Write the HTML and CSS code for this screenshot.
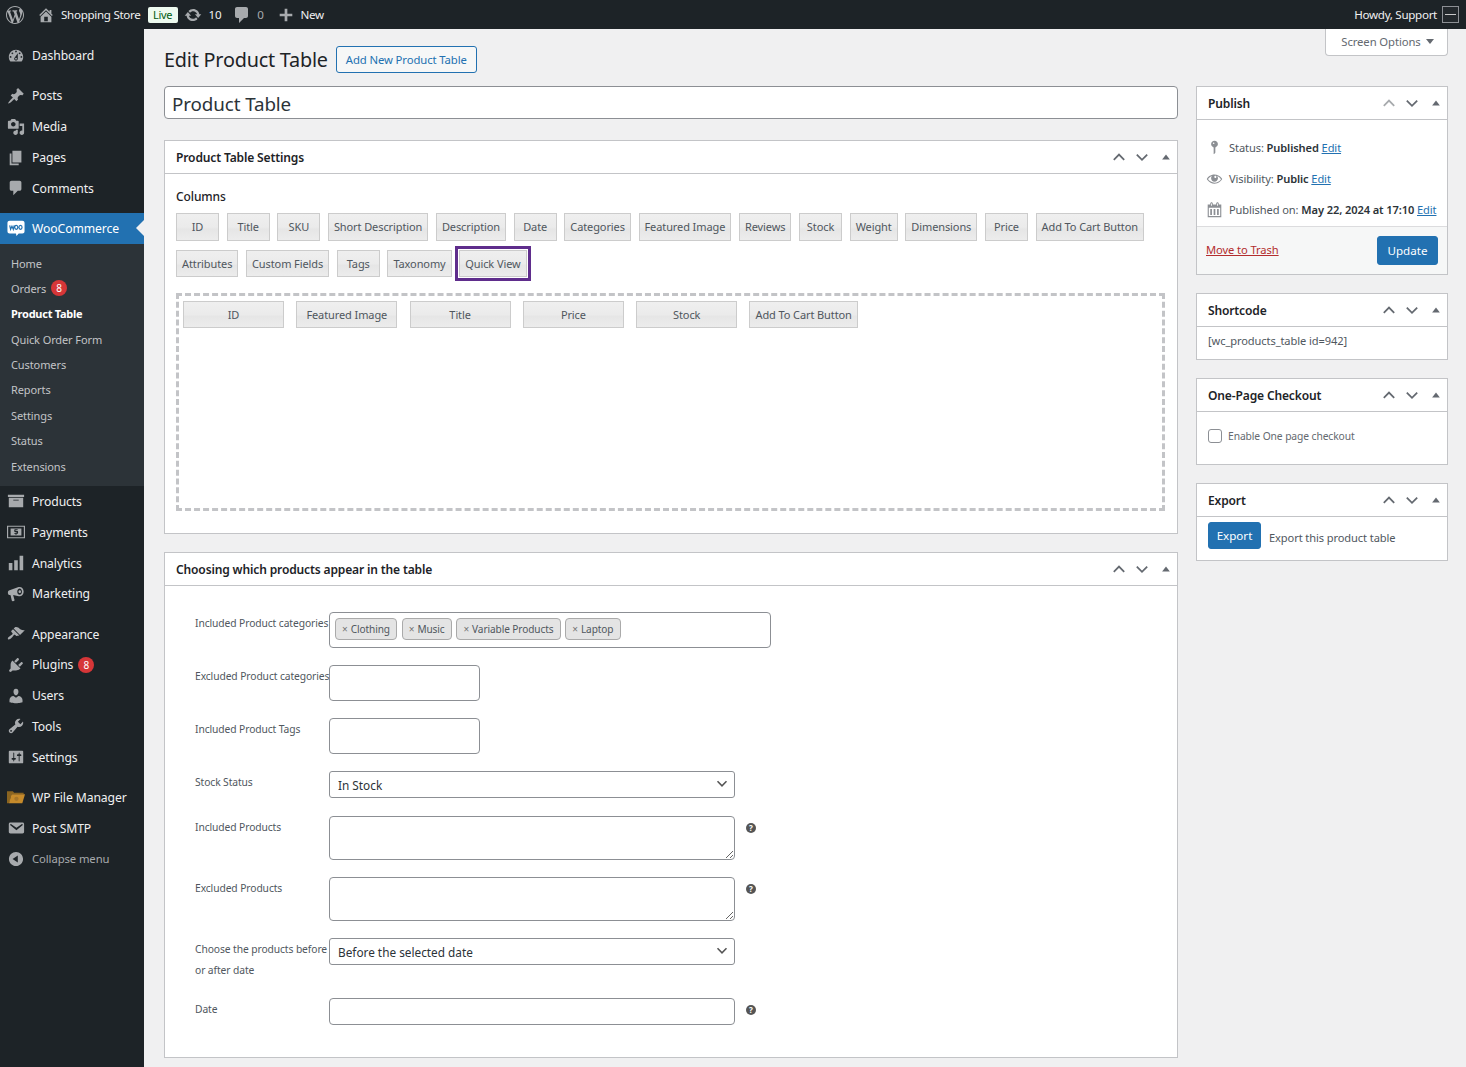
FILE: index.html
```html
<!DOCTYPE html>
<html lang="en">
<head>
<meta charset="utf-8">
<title>Edit Product Table</title>
<link rel="stylesheet" href="styles.css">
</head>
<body>
<svg class="sprite" aria-hidden="true">
<symbol id="i-wp" viewBox="0 0 20 20"><path d="M20 10c0-5.51-4.49-10-10-10C4.48 0 0 4.49 0 10c0 5.52 4.48 10 10 10 5.51 0 10-4.48 10-10zM7.78 15.37L4.37 6.22c.55-.02 1.17-.08 1.17-.08.5-.06.44-1.13-.06-1.11 0 0-1.45.11-2.37.11-.18 0-.37 0-.58-.01C4.12 2.69 6.87 1.11 10 1.11c2.33 0 4.45.87 6.05 2.34-.68-.11-1.65.39-1.65 1.58 0 .74.45 1.36.9 2.1.35.61.55 1.36.55 2.46 0 1.49-1.4 5-1.4 5l-3.03-8.37c.54-.02.82-.17.82-.17.5-.05.44-1.25-.06-1.22 0 0-1.44.12-2.38.12-.87 0-2.33-.12-2.33-.12-.5-.03-.56 1.2-.06 1.22l.92.08 1.26 3.41zM17.41 10c.24-.64.74-1.87.43-4.25.7 1.29 1.05 2.71 1.05 4.25 0 3.29-1.73 6.24-4.4 7.78.97-2.59 1.94-5.2 2.92-7.78zM6.1 18.09C3.12 16.65 1.11 13.53 1.11 10c0-1.3.23-2.48.72-3.59C3.25 10.3 4.67 14.2 6.1 18.09zm4.03-6.63l2.58 6.98c-.86.29-1.76.45-2.71.45-.79 0-1.57-.11-2.29-.33.81-2.38 1.62-4.74 2.42-7.1z"/></symbol>
<symbol id="i-home" viewBox="0 0 20 20"><path d="M16 8.5l1.53 1.53-1.06 1.06L10 4.62l-6.47 6.47-1.06-1.06L10 2.5l4 4v-2h2v4zm-6-2.46l6 5.99V18H4v-5.97zM12 17v-5H8v5h4z"/></symbol>
<symbol id="i-update" viewBox="0 0 20 20"><path d="M10.2 3.28c3.53 0 6.43 2.61 6.92 6h2.08l-3.5 4-3.5-4h2.32c-.45-1.97-2.21-3.45-4.32-3.45-1.45 0-2.73.71-3.54 1.78L4.95 5.66C6.23 4.2 8.11 3.28 10.2 3.28zm-.4 13.44c-3.52 0-6.43-2.61-6.92-6H.8l3.5-4c1.17 1.33 2.33 2.67 3.5 4H5.48c.45 1.97 2.21 3.45 4.32 3.45 1.45 0 2.73-.71 3.54-1.78l1.71 1.95c-1.28 1.46-3.15 2.38-5.25 2.38z"/></symbol>
<symbol id="i-comment" viewBox="0 0 20 20"><path d="M5 2h9c1.1 0 2 .9 2 2v7c0 1.1-.9 2-2 2h-2l-5 5v-5H5c-1.1 0-2-.9-2-2V4c0-1.1.9-2 2-2z"/></symbol>
<symbol id="i-plus" viewBox="0 0 20 20"><path d="M17 8.500v3h-5.500v5.500h-3v-5.500H3v-3h5.500V3h3v5.500z"/></symbol>
<symbol id="i-dash" viewBox="0 0 20 20"><path d="M3.76 16h12.48c1.1-1.37 1.76-3.11 1.76-5 0-4.42-3.58-8-8-8s-8 3.58-8 8c0 1.89.66 3.63 1.76 5zM10 4c.55 0 1 .45 1 1s-.45 1-1 1-1-.45-1-1 .45-1 1-1zM6 6c.55 0 1 .45 1 1s-.45 1-1 1-1-.45-1-1 .45-1 1-1zm8 0c.55 0 1 .45 1 1s-.45 1-1 1-1-.45-1-1 .45-1 1-1zm-5.370 5.550L12 7v6c0 1.100-.9 2-2 2s-2-.9-2-2c0-.57.24-1.080.63-1.450zM4 10c.55 0 1 .45 1 1s-.45 1-1 1-1-.45-1-1 .45-1 1-1zm12 0c.55 0 1 .45 1 1s-.45 1-1 1-1-.45-1-1 .45-1 1-1zm-5 3c0-.55-.45-1-1-1s-1 .45-1 1 .45 1 1 1 1-.45 1-1z" fill-rule="evenodd"/></symbol>
<symbol id="i-pin" viewBox="0 0 20 20"><path d="M10.44 3.020l1.820-1.820 6.360 6.350-1.830 1.820c-1.050-.68-2.480-.57-3.410.36l-.75.75c-.92.93-1.040 2.350-.35 3.410l-1.830 1.820-2.410-2.410-2.800 2.790c-.42.42-3.380 2.710-3.800 2.290s1.860-3.390 2.280-3.810l2.790-2.790L4.100 9.360l1.830-1.820c1.050.69 2.480.57 3.400-.36l.75-.75c.93-.92 1.050-2.350.36-3.410z"/></symbol>
<symbol id="i-media" viewBox="0 0 20 20"><path d="M13 11V4c0-.55-.45-1-1-1h-1.670L9 1H5L3.670 3H2c-.55 0-1 .45-1 1v7c0 .55.45 1 1 1h10c.55 0 1-.45 1-1zM7 4.500c1.380 0 2.500 1.120 2.500 2.500S8.380 9.500 7 9.500 4.500 8.380 4.500 7 5.620 4.500 7 4.500zM14 6h5v10.500c0 1.380-1.120 2.500-2.500 2.500S14 17.880 14 16.500s1.120-2.500 2.500-2.500c.17 0 .34.02.5.05V9h-3V6zm-4 8.050V13h2v3.500c0 1.380-1.120 2.500-2.500 2.500S7 17.880 7 16.500 8.120 14 9.500 14c.17 0 .34.02.5.05z"/></symbol>
<symbol id="i-pages" viewBox="0 0 20 20"><path d="M6 15V2h10v13H6zm-1 1h8v2H3V5h2v11z"/></symbol>
<symbol id="i-archive" viewBox="0 0 20 20"><path d="M19 3v2.500H1V3h18zM2 6.500h16V17H2V6.500zm11 3V8.500H7v1h6z" fill-rule="evenodd"/></symbol>
<symbol id="i-pay" viewBox="0 0 20 20"><path d="M0 3h20v14H0V3zm1.300 1.300v11.400h17.400V4.300H1.300zM4 6h12v8H4V6zm7.800 1H9.200c-.7 0-1.100.5-1.100 1.100v1.200c0 .6.4 1 1.100 1h1.400v.9H8.100V12h1.300v1h1.200v-1h.7c.6 0 1-.4 1-1v-1.300c0-.6-.4-1-1-1H9.400v-.9h2.400V7z" fill-rule="evenodd"/></symbol>
<symbol id="i-bars" viewBox="0 0 20 20"><path d="M18 18V2h-4v16h4zm-6 0V7H8v11h4zm-6 0v-8H2v8h4z"/></symbol>
<symbol id="i-mega" viewBox="0 0 20 20"><path d="M14 2.200c2.500 0 4.500 2.300 4.500 5.200s-2 5.200-4.500 5.200c-.3 0-.6 0-.9-.1L6.800 11l1.500 5.300c.2.700-.2 1.300-.8 1.500l-.8.200c-.6.200-1.200-.2-1.400-.8L4 11.300l-1-.1C1.900 11 1 10 1 8.800V8c0-1.100.8-2.100 1.900-2.300l10-3.400c.4-.1.700-.1 1.100-.1zm0 1.800c-1.400 0-2.600 1.500-2.600 3.400s1.200 3.400 2.600 3.400 2.600-1.500 2.600-3.400S15.400 4 14 4zm.2 1.800c.8 0 1.400.7 1.400 1.600S15 9 14.200 9s-1.400-.7-1.400-1.600.6-1.600 1.400-1.600z" fill-rule="evenodd"/></symbol>
<symbol id="i-brush" viewBox="0 0 20 20"><path d="M14.480 11.060L7.410 3.990l1.500-1.500c.5-.56 2.300-.47 3.510.32 1.210.8 1.430 1.280 2.910 2.100 1.180.64 2.450 1.260 4.450.85zm-.71.71L6.700 4.700 4.930 6.470c-.39.39-.39 1.020 0 1.410l1.060 1.060c.39.39.39 1.030 0 1.420-.6.6-1.430 1.110-2.210 1.690-.35.26-.7.53-1.010.84C1.430 13.230.4 14.980 1.200 15.800c.8.790 2.560-.22 3.910-1.570.31-.31.58-.66.85-1.020.57-.78 1.080-1.610 1.690-2.210.39-.39 1.020-.39 1.410 0l1.060 1.060c.39.39 1.020.39 1.410 0z"/></symbol>
<symbol id="i-plug" viewBox="0 0 20 20"><path d="M13.110 4.360L9.870 7.600 8 5.730l3.240-3.240c.35-.34 1.050-.2 1.560.32.52.51.66 1.210.31 1.550zm-8 1.770l.91-1.120 9.010 9.010-1.190.84c-.71.71-2.630 1.160-3.820 1.160H6.140L4.900 17.260c-.59.59-1.540.59-2.120 0-.59-.58-.59-1.530 0-2.120l1.240-1.240v-3.880c0-1.130.4-3.190 1.090-3.890zm7.260 3.970l3.240-3.240c.34-.35 1.040-.21 1.550.31.52.51.66 1.210.31 1.550l-3.240 3.250z"/></symbol>
<symbol id="i-user" viewBox="0 0 20 20"><path d="M10 9.250c-2.270 0-2.730-3.440-2.730-3.440C7 4.020 7.820 2 9.970 2c2.160 0 2.980 2.020 2.710 3.810 0 0-.41 3.440-2.680 3.440zm0 2.570L12.720 10c2.390 0 4.520 2.330 4.520 4.530v2.490s-3.650 1.130-7.240 1.130c-3.650 0-7.240-1.130-7.240-1.130v-2.490c0-2.250 1.940-4.480 4.470-4.480z"/></symbol>
<symbol id="i-tool" viewBox="0 0 20 20"><path d="M16.680 9.770c-1.340 1.340-3.300 1.670-4.950.99l-5.410 6.520c-.99.99-2.590.99-3.580 0s-.99-2.590 0-3.570l6.520-5.420c-.68-1.650-.35-3.610.99-4.950 1.280-1.280 3.120-1.620 4.720-1.060l-2.890 2.890 2.820 2.820 2.860-2.870c.53 1.580.18 3.390-1.080 4.650zM3.810 16.210c.4.39 1.040.39 1.430 0 .4-.4.4-1.040 0-1.430-.39-.4-1.030-.4-1.430 0-.39.39-.39 1.030 0 1.430z"/></symbol>
<symbol id="i-set" viewBox="0 0 20 20"><path d="M18 16V4c0-.55-.45-1-1-1H3c-.55 0-1 .45-1 1v12c0 .55.45 1 1 1h14c.55 0 1-.45 1-1zM8 11h1c.55 0 1 .45 1 1s-.45 1-1 1H8v1.500c0 .28-.22.5-.5.5s-.5-.22-.5-.5V13H6c-.55 0-1-.45-1-1s.45-1 1-1h1V5.500c0-.28.22-.5.5-.5s.5.22.5.5V11zm5-2h-1c-.55 0-1-.45-1-1s.45-1 1-1h1V5.500c0-.28.22-.5.5-.5s.5.22.5.5V7h1c.55 0 1 .45 1 1s-.45 1-1 1h-1v5.500c0 .28-.22.5-.5.5s-.5-.22-.5-.5V9z"/></symbol>
<symbol id="i-mail" viewBox="0 0 20 20"><path d="M3.870 4h13.250C18.370 4 19 4.590 19 5.790v8.420c0 1.190-.63 1.790-1.880 1.790H3.870c-1.250 0-1.880-.6-1.880-1.790V5.790c0-1.200.63-1.790 1.880-1.790zm6.620 8.600l6.740-5.530c.24-.2.43-.66.13-1.070-.29-.41-.82-.42-1.170-.17l-5.700 3.860L4.800 5.830c-.35-.25-.88-.24-1.170.17-.3.41-.11.87.13 1.070z"/></symbol>
<symbol id="i-collapse" viewBox="0 0 20 20"><path d="M10 2.160c4.330 0 7.840 3.510 7.840 7.840s-3.510 7.840-7.840 7.840S2.160 14.330 2.160 10 5.710 2.160 10 2.160zm2 11.720V6.120L6.180 9.970z"/></symbol>
<symbol id="i-key" viewBox="0 0 20 20"><path d="M14 6c0 1.860-1.280 3.410-3 3.860V16c0 1-2 2-2 2V9.860c-1.720-.45-3-2-3-3.860 0-2.210 1.790-4 4-4s4 1.790 4 4zM8 5c0 .55.45 1 1 1s1-.45 1-1-.45-1-1-1-1 .45-1 1z"/></symbol>
<symbol id="i-eye" viewBox="0 0 20 20"><path d="M18.300 9.500C15 4.900 8.500 3.800 3.900 7.200c-1.200.9-2.200 2.100-3 3.400.2.4.5.8.8 1.200 3.300 4.600 9.600 5.600 14.200 2.400.9-.7 1.700-1.400 2.400-2.400.3-.4.5-.8.8-1.200-.3-.4-.5-.8-.8-1.100zm-8.200-2.300c.5-.5 1.300-.5 1.800 0s.5 1.300 0 1.800-1.300.5-1.800 0-.5-1.300 0-1.800zm-.1 7.700c-3.100 0-6-1.600-7.700-4.200C3.500 9 5.100 7.800 7 7c-.7.8-1 1.700-1 2.700 0 2.200 1.700 4.100 4 4.100 2.200 0 4.100-1.700 4.100-4 0-1-.4-2-1.100-2.700 1.900.8 3.500 2 4.700 3.700-1.700 2.600-4.600 4.200-7.700 4.200z"/></symbol>
<symbol id="i-cal" viewBox="0 0 20 20"><path d="M15 4h3v15H2V4h3V3c0-.8.7-1.500 1.500-1.500S8 2.200 8 3v1h4V3c0-.8.7-1.500 1.500-1.500S15 2.200 15 3v1zM3.300 8v9.700h13.400V8H3.300zM5 9.500h2v7H5v-7zm4 0h2v7H9v-7zm4 0h2v7h-2v-7zM6 3v2.500h1V3H6zm7 0v2.500h1V3h-1z" fill-rule="evenodd"/></symbol>
<symbol id="i-up" viewBox="0 0 20 20"><path d="M3.500 13.500L10 7l6.500 6.500" fill="none" stroke="currentColor" stroke-width="2.200"/></symbol>
<symbol id="i-down" viewBox="0 0 20 20"><path d="M3.500 7L10 13.500 16.500 7" fill="none" stroke="currentColor" stroke-width="2.200"/></symbol>
<symbol id="i-tri" viewBox="0 0 20 20"><path d="M4.500 13.500L10 6.500l5.500 7z"/></symbol>
<symbol id="i-folder" viewBox="0 0 20 20"><path d="M0 3.500h6.500l1.500 1.800h10.500V7H5L2.500 17H0z" fill="#8a6420"/><path d="M5 7h15l-3 10H2.200z" fill="#c58a2b"/><circle cx="10.500" cy="12" r="2.400" fill="#a6762a"/></symbol>
<symbol id="i-woo" viewBox="0 0 20 20"><path d="M3 2h14c1.500 0 2.500 1 2.500 2.500v9c0 1.500-1 2.500-2.500 2.500h-4l-2.500 3-.5-3H3c-1.500 0-2.500-1-2.500-2.500v-9C.5 3 1.500 2 3 2z" fill="#fff"/><path d="M3 7l1 4.500L5.500 8 7 11.500 8 7M10.300 7c-2.300 0-2.300 4.500 0 4.500s2.300-4.500 0-4.500zM15 7c-2.300 0-2.300 4.500 0 4.500s2.300-4.500 0-4.500z" fill="none" stroke="#2271b1" stroke-width="1.300"/></symbol>
</svg>

<header class="adminbar">
  <div class="bar-left">
    <svg class="bar-logo"><use href="#i-wp"/></svg>
    <span class="bar-item bar-site"><svg class="bar-icon"><use href="#i-home"/></svg>Shopping Store</span>
    <span class="live">Live</span>
    <span class="bar-item bar-updates"><svg class="bar-icon"><use href="#i-update"/></svg>10</span>
    <span class="bar-item bar-comments"><svg class="bar-icon bar-icon-lg"><use href="#i-comment"/></svg><span class="zero">0</span></span>
    <span class="bar-item bar-new"><svg class="bar-icon"><use href="#i-plus"/></svg>New</span>
  </div>
  <div class="bar-right">
    <span>Howdy, Support</span>
    <span class="avatar"><span class="avatar-mark"></span></span>
  </div>
</header>

<div class="layout">
  <nav class="sidebar">
    <ul class="menu">
      <li class="item"><svg class="mi"><use href="#i-dash"/></svg>Dashboard</li>
      <li class="sep"></li>
      <li class="item"><svg class="mi"><use href="#i-pin"/></svg>Posts</li>
      <li class="item"><svg class="mi"><use href="#i-media"/></svg>Media</li>
      <li class="item"><svg class="mi"><use href="#i-pages"/></svg>Pages</li>
      <li class="item"><svg class="mi"><use href="#i-comment"/></svg>Comments</li>
      <li class="sep sep-wide"></li>
      <li class="item current"><svg class="mi mi-woo"><use href="#i-woo"/></svg>WooCommerce</li>
      <li class="submenu">
        <ul>
          <li>Home</li>
          <li>Orders <span class="count">8</span></li>
          <li class="sub-active">Product Table</li>
          <li>Quick Order Form</li>
          <li>Customers</li>
          <li>Reports</li>
          <li>Settings</li>
          <li>Status</li>
          <li>Extensions</li>
        </ul>
      </li>
      <li class="item"><svg class="mi"><use href="#i-archive"/></svg>Products</li>
      <li class="item"><svg class="mi"><use href="#i-pay"/></svg>Payments</li>
      <li class="item"><svg class="mi"><use href="#i-bars"/></svg>Analytics</li>
      <li class="item"><svg class="mi"><use href="#i-mega"/></svg>Marketing</li>
      <li class="sep"></li>
      <li class="item"><svg class="mi"><use href="#i-brush"/></svg>Appearance</li>
      <li class="item"><svg class="mi"><use href="#i-plug"/></svg>Plugins <span class="count">8</span></li>
      <li class="item"><svg class="mi"><use href="#i-user"/></svg>Users</li>
      <li class="item"><svg class="mi"><use href="#i-tool"/></svg>Tools</li>
      <li class="item"><svg class="mi"><use href="#i-set"/></svg>Settings</li>
      <li class="sep"></li>
      <li class="item"><svg class="mi"><use href="#i-folder"/></svg>WP File Manager</li>
      <li class="item"><svg class="mi"><use href="#i-mail"/></svg>Post SMTP</li>
      <li class="item collapse"><svg class="mi"><use href="#i-collapse"/></svg>Collapse menu</li>
    </ul>
  </nav>

  <main class="main">
    <button class="screen-options" type="button">Screen Options <span class="caret"></span></button>
    <div class="page-head">
      <h1>Edit Product Table</h1>
      <a class="add-new">Add New Product Table</a>
    </div>
    <div class="columns">
      <div class="col-left">
        <input class="title-input" type="text" value="Product Table">

        <section class="panel panel-settings">
          <div class="panel-head"><h2>Product Table Settings</h2><div class="ctrls"><svg class="c"><use href="#i-up"/></svg><svg class="c"><use href="#i-down"/></svg><svg class="c c-tri"><use href="#i-tri"/></svg></div></div>
          <div class="settings-body">
            <div class="columns-label">Columns</div>
            <div class="chips">
              <span class="chip">ID</span><span class="chip">Title</span><span class="chip">SKU</span><span class="chip">Short Description</span><span class="chip">Description</span><span class="chip">Date</span><span class="chip">Categories</span><span class="chip">Featured Image</span><span class="chip">Reviews</span><span class="chip">Stock</span><span class="chip">Weight</span><span class="chip">Dimensions</span><span class="chip">Price</span><span class="chip">Add To Cart Button</span><span class="chip">Attributes</span><span class="chip">Custom Fields</span><span class="chip">Tags</span><span class="chip">Taxonomy</span><span class="chip chip-focus">Quick View</span>
            </div>
            <div class="dropzone">
              <span class="chip chip-wide">ID</span><span class="chip chip-wide">Featured Image</span><span class="chip chip-wide">Title</span><span class="chip chip-wide">Price</span><span class="chip chip-wide">Stock</span><span class="chip chip-wide">Add To Cart Button</span>
            </div>
          </div>
        </section>

        <section class="panel panel-products">
          <div class="panel-head"><h2>Choosing which products appear in the table</h2><div class="ctrls"><svg class="c"><use href="#i-up"/></svg><svg class="c"><use href="#i-down"/></svg><svg class="c c-tri"><use href="#i-tri"/></svg></div></div>
          <div class="form-grid">
            <label class="f-label f-nowrap">Included Product categories</label>
            <div class="f-field"><div class="tagbox">
              <span class="tag"><i>×</i>Clothing</span><span class="tag"><i>×</i>Music</span><span class="tag"><i>×</i>Variable Products</span><span class="tag"><i>×</i>Laptop</span>
            </div></div>
            <label class="f-label f-nowrap">Excluded Product categories</label>
            <div class="f-field"><div class="smallbox"></div></div>
            <label class="f-label">Included Product Tags</label>
            <div class="f-field"><div class="smallbox"></div></div>
            <label class="f-label">Stock Status</label>
            <div class="f-field"><select class="f-select"><option>In Stock</option></select></div>
            <label class="f-label">Included Products</label>
            <div class="f-field"><textarea class="f-area"></textarea><span class="help">?</span></div>
            <label class="f-label">Excluded Products</label>
            <div class="f-field"><textarea class="f-area"></textarea><span class="help">?</span></div>
            <label class="f-label">Choose the products before or after date</label>
            <div class="f-field"><select class="f-select"><option>Before the selected date</option></select></div>
            <label class="f-label">Date</label>
            <div class="f-field"><input class="f-input" type="text"><span class="help">?</span></div>
          </div>
        </section>
      </div>

      <aside class="col-right">
        <section class="panel">
          <div class="panel-head"><h2>Publish</h2><div class="ctrls"><svg class="c c-dim"><use href="#i-up"/></svg><svg class="c"><use href="#i-down"/></svg><svg class="c c-tri"><use href="#i-tri"/></svg></div></div>
          <div class="pub-rows">
            <div class="pub-row"><svg class="pi"><use href="#i-key"/></svg><span>Status: <b>Published</b> <a>Edit</a></span></div>
            <div class="pub-row"><svg class="pi"><use href="#i-eye"/></svg><span>Visibility: <b>Public</b> <a>Edit</a></span></div>
            <div class="pub-row"><svg class="pi"><use href="#i-cal"/></svg><span>Published on: <b>May 22, 2024 at 17:10</b> <a>Edit</a></span></div>
          </div>
          <div class="pub-foot"><a class="trash">Move to Trash</a><button class="primary update" type="button">Update</button></div>
        </section>
        <section class="panel">
          <div class="panel-head"><h2>Shortcode</h2><div class="ctrls"><svg class="c"><use href="#i-up"/></svg><svg class="c"><use href="#i-down"/></svg><svg class="c c-tri"><use href="#i-tri"/></svg></div></div>
          <div class="shortcode">[wc_products_table id=942]</div>
        </section>
        <section class="panel">
          <div class="panel-head"><h2>One-Page Checkout</h2><div class="ctrls"><svg class="c"><use href="#i-up"/></svg><svg class="c"><use href="#i-down"/></svg><svg class="c c-tri"><use href="#i-tri"/></svg></div></div>
          <label class="checkout"><input class="check" type="checkbox">Enable One page checkout</label>
        </section>
        <section class="panel">
          <div class="panel-head"><h2>Export</h2><div class="ctrls"><svg class="c"><use href="#i-up"/></svg><svg class="c"><use href="#i-down"/></svg><svg class="c c-tri"><use href="#i-tri"/></svg></div></div>
          <div class="export"><button class="primary export-btn" type="button">Export</button><span class="export-note">Export this product table</span></div>
        </section>
      </aside>
    </div>
  </main>
</div>
</body>
</html>
```
FILE: styles.css
```css
* { box-sizing: border-box; }
html, body { margin: 0; padding: 0; height: 1067px; overflow: hidden; }
body {
  background: #f0f0f1;
  color: #3c434a;
  font-family: "Noto Sans", "Open Sans", sans-serif;
  font-size: 11px;
  letter-spacing: -.1px;
}
.sprite { display: none; }
svg { fill: currentColor; flex: none; display: block; }
ul { list-style: none; margin: 0; padding: 0; }
h1, h2 { margin: 0; font-weight: 400; }

/* admin bar */
.adminbar {
  height: 29px;
  background: #1d2327;
  color: #f0f0f1;
  display: flex;
  justify-content: space-between;
  align-items: center;
  font-size: 11.600px;
  letter-spacing: -.3px;
}
.bar-left { display: flex; align-items: center; height: 100%; }
.bar-logo { width: 18px; height: 18px; margin-left: 6px; color: #a7aaad; }
.bar-item { display: flex; align-items: center; }
.bar-icon { width: 18px; height: 18px; color: #a7aaad; }
.bar-icon-lg { width: 20px; height: 20px; }
.bar-site { margin-left: 13px; }
.bar-site .bar-icon { margin-right: 6px; }
.live {
  margin-left: 7px;
  width: 30px;
  height: 16px;
  line-height: 15px;
  text-align: center;
  background: #edfaef;
  color: #005c12;
  border-radius: 2px;
  font-size: 11px;
}
.bar-updates { margin-left: 6.500px; }
.bar-updates .bar-icon { margin-right: 6.500px; }
.bar-comments { margin-left: 11px; }
.bar-comments .bar-icon { margin-right: 5px; }
.zero { color: #a7aaad; }
.bar-new { margin-left: 13px; }
.bar-new .bar-icon { margin-right: 6px; }
.bar-right { display: flex; align-items: center; gap: 5px; margin-right: 7px; }
.avatar {
  width: 17px;
  height: 17px;
  border: 1px solid #8c8f94;
  background: #23282c;
  display: flex;
  align-items: center;
  padding: 0 2px;
}
.avatar-mark { width: 11px; height: 1px; background: #c8c8c8; }

/* layout */
.layout { display: flex; height: 1038px; }
.sidebar {
  width: 144px;
  flex: none;
  background: #1d2327;
  color: #f0f0f1;
  font-size: 12.200px;
  padding-top: 11.400px;
}
.item {
  height: 30.800px;
  display: flex;
  align-items: center;
  padding-left: 7px;
  position: relative;
}
.mi { width: 18px; height: 18px; margin-right: 7px; color: #a7aaad; }
.mi-woo { color: #fff; }
.sep { height: 9.400px; }
.sep-wide { height: 9.200px; }
.current { background: #2271b1; color: #fff; }
.current::after {
  content: "";
  position: absolute;
  right: 0;
  top: 50%;
  margin-top: -8px;
  border: 8px solid transparent;
  border-right-color: #f0f0f1;
  border-left-width: 0;
}
.submenu { background: #2c3338; padding: 6.600px 0 7.200px; color: #c3c4c7; font-size: 11px; }
.submenu li { height: 25.400px; display: flex; align-items: center; padding-left: 11px; }
.submenu .sub-active { color: #fff; font-weight: 700; letter-spacing: -.25px; }
.count {
  display: inline-block;
  width: 16px;
  height: 16px;
  line-height: 16px;
  margin-left: 5px;
  border-radius: 50%;
  background: #d63638;
  color: #fff;
  font-size: 10px;
  text-align: center;
  letter-spacing: 0;
}
.collapse { color: #a7aaad; font-size: 11.300px; }

/* main */
.main { flex: 1; padding: 17px 18px 0 20px; position: relative; min-width: 0; }
.screen-options {
  position: absolute;
  top: 0;
  right: 18px;
  width: 123px;
  height: 27px;
  background: #fff;
  border: 1px solid #c3c4c7;
  border-top: 0;
  border-radius: 0 0 4px 4px;
  color: #646970;
  font: inherit;
  letter-spacing: inherit;
  font-size: 11.300px;
  padding: 0 0 2px 2px;
  display: flex;
  align-items: center;
  justify-content: center;
  gap: 5px;
}
.caret { border: 4px solid transparent; border-top: 5px solid #646970; border-bottom: 0; }
.page-head { display: flex; align-items: center; height: 27px; margin-bottom: 13px; }
h1 { font-size: 19.800px; line-height: 27px; color: #1d2327; letter-spacing: -.2px; }
.add-new {
  margin-left: 8px;
  height: 27px;
  width: 141px;
  line-height: 25px;
  text-align: center;
  border: 1px solid #2271b1;
  border-radius: 3px;
  color: #2271b1;
  background: #f6f7f7;
  font-size: 11.300px;
}
.columns { display: grid; grid-template-columns: 1014px 252px; column-gap: 18px; }
.title-input {
  display: block;
  width: 100%;
  height: 33px;
  border: 1px solid #8c8f94;
  border-radius: 4px;
  padding: 2px 7px 0;
  font: inherit;
  font-size: 18.800px;
  letter-spacing: -.1px;
  color: #2c3338;
  background: #fff;
  margin-bottom: 21px;
}
.panel { background: #fff; border: 1px solid #c3c4c7; margin-bottom: 18px; }
.panel-head {
  height: 33px;
  border-bottom: 1px solid #c3c4c7;
  display: flex;
  align-items: center;
  justify-content: space-between;
  padding: 0 4px 0 11px;
}
.panel-head h2 { font-size: 12.050px; font-weight: 600; color: #1d2327; letter-spacing: -.15px; }
.ctrls { display: flex; align-items: center; gap: 7px; color: #646970; }
.c { width: 16px; height: 16px; }
.c-tri { width: 14px; height: 14px; margin-left: 2px; }
.c-dim { color: #a7aaad; }

/* settings */
.settings-body { padding: 12px 12px 22px 11px; }
.columns-label { font-size: 12px; line-height: 21px; color: #1d2327; font-weight: 500; margin-bottom: 6px; }
.chips { display: flex; flex-wrap: wrap; gap: 9px 7.650px; margin-bottom: 16px; }
.chip {
  min-width: 43px;
  height: 27.500px;
  padding: 0 5px;
  display: flex;
  align-items: center;
  justify-content: center;
  border: 1px solid #ccc;
  background: linear-gradient(#efefef 0, #ebebeb 50%, #e6e6e6 58%, #ececec 100%);
  color: #50575e;
  font-size: 11px;
  white-space: nowrap;
}
.chip-focus { outline: 3px solid #5f2d8c; outline-offset: 1px; }
.dropzone {
  height: 218px;
  border: 3px dashed #c3c4c7;
  padding: 5px 4px;
  display: flex;
  gap: 12.300px;
  align-items: flex-start;
}
.chip-wide { min-width: 101px; height: 27px; }

/* form */
.form-grid {
  display: grid;
  grid-template-columns: 134px 1fr;
  row-gap: 17.100px;
  padding: 26px 0 32px 30px;
}
.f-label { font-size: 10.300px; line-height: 21px; color: #50575e; padding-top: 1px; }
.f-nowrap { white-space: nowrap; }
.f-field { display: flex; align-items: flex-start; gap: 11px; }
.tagbox {
  width: 442px;
  height: 36px;
  background: #fff;
  border: 1px solid #8c8f94;
  border-radius: 4px;
  padding: 5px;
  display: flex;
  gap: 4.300px;
}
.tag {
  height: 22px;
  line-height: 20px;
  padding: 0 6.500px 0 6px;
  background: #e4e4e4;
  border: 1px solid #aaa;
  border-radius: 4px;
  color: #50575e;
  font-size: 10.100px;
  white-space: nowrap;
}
.tag i { font-style: normal; color: #777; margin-right: 3px; }
.smallbox {
  width: 151px;
  height: 36px;
  border: 1px solid #8c8f94;
  border-radius: 4px;
  background: #fff;
}
.f-select {
  width: 406px;
  height: 27px;
  margin-bottom: .6px;
  border: 1px solid #8c8f94;
  border-radius: 3px;
  padding: 0 8px;
  font: inherit;
  font-size: 11.800px;
  color: #2c3338;
  appearance: none;
  background: #fff url("data:image/svg+xml;charset=utf-8,%3Csvg xmlns='http://www.w3.org/2000/svg' width='20' height='20'%3E%3Cpath d='M5 7l5 5 5-5' fill='none' stroke='%23555' stroke-width='1.700'/%3E%3C/svg%3E") no-repeat right 3px top 3px / 18px 18px;
}
.f-area {
  display: block;
  width: 406px;
  height: 44px;
  border: 1px solid #8c8f94;
  border-radius: 4px;
  background: #fff;
}
.f-input {
  display: block;
  width: 406px;
  height: 27px;
  border: 1px solid #8c8f94;
  border-radius: 4px;
  background: #fff;
}
.help {
  width: 10px;
  height: 10px;
  margin-top: 7px;
  border-radius: 50%;
  background: #555;
  color: #fff;
  font-size: 8px;
  font-weight: 700;
  line-height: 10px;
  text-align: center;
  letter-spacing: 0;
}

/* sidebar panels */
.pub-rows { padding: 12px 9px 0; height: 106px; }
.pub-row { height: 31px; display: flex; align-items: center; color: #50575e; font-size: 11.100px; white-space: nowrap; }
.pub-row b { font-weight: 600; color: #2c3338; }
.pub-row a { color: #2271b1; text-decoration: underline; }
.pi { width: 17px; height: 17px; margin-right: 6px; color: #8c8f94; }
.pub-foot {
  height: 48px;
  background: #f6f7f7;
  border-top: 1px solid #dcdcde;
  display: flex;
  align-items: center;
  justify-content: space-between;
  padding: 0 9px;
}
.trash { color: #b32d2e; text-decoration: underline; font-size: 11.200px; margin-bottom: 2px; }
.primary {
  background: #2271b1;
  border: 1px solid #2271b1;
  border-radius: 3px;
  color: #fff;
  font: inherit;
  font-size: 11.600px;
  padding: 0;
}
.update { width: 61px; height: 29px; }
.shortcode { height: 32px; line-height: 27px; padding-left: 11px; font-size: 11.100px; color: #50575e; }
.checkout {
  height: 52px;
  display: flex;
  align-items: center;
  padding: 0 0 5px 11px;
  color: #646970;
  font-size: 10.300px;
}
.check {
  appearance: none;
  width: 14px;
  height: 14px;
  margin: 0 6px 0 0;
  background: #fff;
  border: 1px solid #8c8f94;
  border-radius: 3px;
}
.export { height: 43px; display: flex; align-items: flex-start; gap: 8px; padding: 5px 11px 0; font-size: 11.100px; color: #50575e; }
.export-btn { width: 53px; height: 27px; }
.export-note { line-height: 27px; margin-top: 2px; }
```
